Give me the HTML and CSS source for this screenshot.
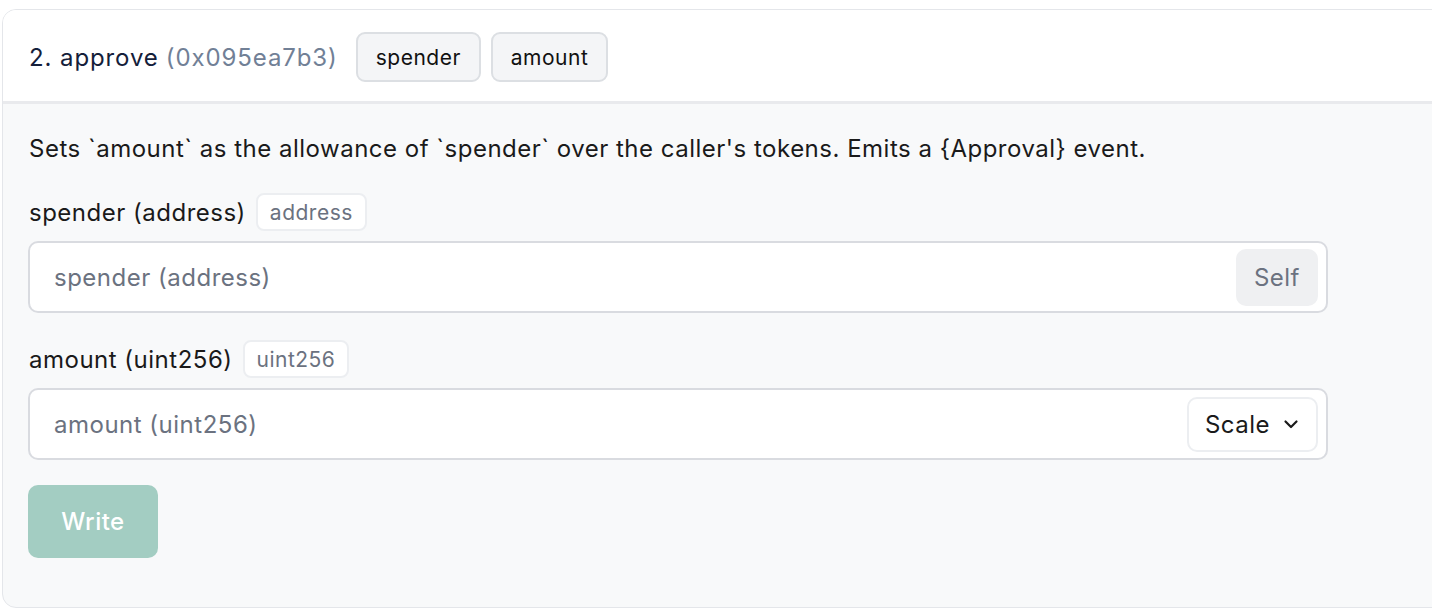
FILE: index.html
```html
<!DOCTYPE html>
<html lang="en">
<head>
  <meta charset="UTF-8">
  <title>approve</title>
  <meta name="viewport" content="width=device-width, initial-scale=1.0">
  <link rel="stylesheet" href="styles.css">
</head>
<body>

  <div class="fn-card">
    <div class="fn-head">
      <span class="fn-name">2. approve</span>
      <span class="fn-sig">(0x095ea7b3)</span>
      <span class="arg-chip">spender</span>
      <span class="arg-chip">amount</span>
    </div>

    <form class="fn-body" id="approveForm">
      <p class="fn-desc">Sets `amount` as the allowance of `spender` over the caller's tokens. Emits a {Approval} event.</p>

      <div class="field">
        <div class="field-label">
          <label for="spender">spender (address)</label>
          <span class="type-tag">address</span>
        </div>
        <div class="input-wrap">
          <input type="text" id="spender" name="spender" placeholder="spender (address)">
          <button type="button" class="self-btn">Self</button>
        </div>
      </div>

      <div class="field">
        <div class="field-label">
          <label for="amount">amount (uint256)</label>
          <span class="type-tag">uint256</span>
        </div>
        <div class="input-wrap">
          <input type="text" id="amount" name="amount" placeholder="amount (uint256)">
          <button type="button" class="scale-btn">Scale
            <svg width="18" height="18" viewBox="0 0 18 18" fill="none" stroke="currentColor" stroke-width="2.2" stroke-linecap="round" stroke-linejoin="round"><path d="M3.5 6.5l5.5 5.5 5.5-5.5"/></svg>
          </button>
        </div>
      </div>

      <div class="actions">
        <button type="submit" class="write-btn" disabled>Write</button>
      </div>
    </form>
  </div>

</body>
</html>
```

FILE: styles.css
```css
body {
  margin: 0;
  padding: 9px 0 0 2px;
  background: #ffffff;
  font-family: Inter, "Noto Sans", sans-serif;
  letter-spacing: 0.5px;
  color: #1a202c;
  overflow: hidden;
}
button, input {
  font-family: inherit;
  letter-spacing: inherit;
}
.fn-card {
  margin-right: -20px;
  border: 1px solid #e4e6ea;
  border-radius: 14px;
  background: #f8f9fa;
  overflow: hidden;
}
.fn-head {
  display: flex;
  align-items: center;
  height: 88px;
  padding: 3px 0 0 26px;
  background: #ffffff;
  border-bottom: 3px solid #e9eaed;
  font-size: 24px;
  letter-spacing: 0.9px;
}
.fn-name {
  color: #14203a;
}
.fn-sig {
  color: #718096;
  margin-left: 7px;
  margin-right: 18px;
}
.arg-chip {
  display: inline-flex;
  align-items: center;
  height: 46px;
  padding: 0 18px;
  margin-right: 10px;
  border: 2px solid #dcdfe3;
  border-radius: 9px;
  background: #f4f5f7;
  font-size: 21px;
  letter-spacing: 0.5px;
  color: #111;
}
.fn-body {
  display: flex;
  flex-direction: column;
  gap: 28px;
  padding: 28px 123px 49px 25px;
  margin: 0;
}
.fn-desc {
  margin: 0;
  font-size: 24px;
  line-height: 33px;
  color: #1a1a1a;
  padding-left: 1px;
}
.field {
  display: flex;
  flex-direction: column;
  gap: 10px;
}
.field + .field {
  margin-top: -1px;
}
.field-label {
  display: flex;
  align-items: center;
  gap: 10px;
  font-size: 24px;
  color: #1a1a1a;
  padding-left: 1px;
}
.type-tag {
  display: inline-flex;
  align-items: center;
  height: 34px;
  padding: 0 12px;
  border: 2px solid #eceef1;
  border-radius: 8px;
  background: #ffffff;
  font-size: 21px;
  color: #6b7280;
}
.input-wrap {
  display: flex;
  align-items: center;
  height: 72px;
  box-sizing: border-box;
  padding: 0 8px 0 24px;
  border: 2px solid #d9dbe0;
  border-radius: 10px;
  background: #ffffff;
}
.input-wrap input {
  flex: 1;
  border: none;
  outline: none;
  background: transparent;
  font-size: 24px;
  color: #1a1a1a;
  padding: 0;
}
.input-wrap input::placeholder {
  color: #6b7280;
}
.self-btn {
  height: 57px;
  padding: 0 18px;
  border: none;
  border-radius: 10px;
  background: #eff0f2;
  font-size: 24px;
  color: #6b7280;
}
.scale-btn {
  display: flex;
  align-items: center;
  gap: 12px;
  height: 55px;
  padding: 0 16px 0 16px;
  border: 2px solid #eceef1;
  border-radius: 10px;
  background: #ffffff;
  font-size: 24px;
  color: #1a1a1a;
}
.actions {
  margin-top: -3px;
}
.write-btn {
  width: 130px;
  height: 73px;
  border: none;
  border-radius: 10px;
  background: #a3cdc2;
  color: #ffffff;
  font-size: 24px;
  font-weight: 500;
}
```
